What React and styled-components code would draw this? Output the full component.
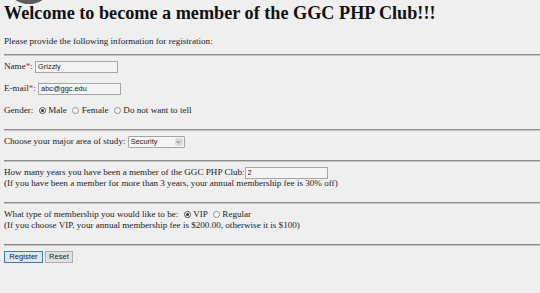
import React from 'react';
import styled, { createGlobalStyle } from 'styled-components';

// global page look

const GlobalStyle = createGlobalStyle`
  html, body {
    margin: 0;
    padding: 0;
    background: #efefef;
  }
  body {
    font-family: "Liberation Serif", "Times New Roman", serif;
    color: #1c1c1c;
    overflow: hidden;
  }
`;

const Page = styled.div`
  position: relative;
  width: 540px;
  height: 293px;
  padding-left: 4px;
  box-sizing: border-box;
  font-size: 9.1px;
`;

// dark round thing poking in from the top edge
const Blob = styled.div`
  position: absolute;
  left: 12px;
  top: -17px;
  width: 34px;
  height: 21px;
  border-radius: 50%;
  background: #5c5c5c;
`;

const Title = styled.h1`
  margin: 0;
  padding-top: 3px;
  font-size: 18.2px;
  line-height: 20px;
  font-weight: bold;
  color: #111;
  white-space: nowrap;
`;

const Intro = styled.p`
  margin: 13px 0 0;
  line-height: 11px;
`;

const Divider = styled.hr`
  margin: ${(p) => (p.$first ? '7px' : '13.5px')} 0 4.5px;
  height: 0;
  border: 0;
  border-top: 1px solid #8c8c8c;
  border-bottom: 1px solid #c4c4c4;
`;

const Line = styled.div`
  height: 11px;
  line-height: 11px;
  white-space: nowrap;
  margin-top: ${(p) => (p.$spaced ? '11px' : '0')};
`;

const Star = styled.span`
  color: #c8302c;
`;

const TextInput = styled.input`
  box-sizing: border-box;
  width: 83px;
  height: 12px;
  padding: 0 2px;
  margin: 0;
  border: 1px solid #a6a6a6;
  background: #f4f4f4;
  font-family: "Liberation Sans", Arial, sans-serif;
  font-size: 7.4px;
  color: #222;
  vertical-align: middle;
  outline: none;
`;

const Radio = styled.span`
  display: inline-block;
  position: relative;
  width: 7px;
  height: 7px;
  box-sizing: border-box;
  margin: 0 2.6px 0 3px;
  border-radius: 50%;
  border: 1px solid ${(p) => (p.$checked ? '#4a4a4a' : '#8e8e8e')};
  background: #f8f8f8;
  vertical-align: middle;
  &::after {
    content: '';
    display: ${(p) => (p.$checked ? 'block' : 'none')};
    position: absolute;
    left: 1px;
    top: 1px;
    width: 3px;
    height: 3px;
    border-radius: 50%;
    background: #333;
  }
`;

const SelectWrap = styled.span`
  position: relative;
  display: inline-block;
  vertical-align: middle;
`;

const Select = styled.select`
  appearance: none;
  box-sizing: border-box;
  width: 57px;
  height: 12px;
  margin: 0;
  padding: 0 0 0 2px;
  border: 1px solid #a6a6a6;
  border-radius: 1px;
  background: #f4f4f4;
  font-family: "Liberation Sans", Arial, sans-serif;
  font-size: 7.4px;
  color: #222;
  line-height: 10px;
  display: block;
  outline: none;
`;

const Chevron = styled.span`
  position: absolute;
  right: 2px;
  top: 2px;
  width: 8px;
  height: 8px;
  border-radius: 2px;
  background: #dcdcdc;
  display: flex;
  align-items: center;
  justify-content: center;
  pointer-events: none;
`;

const ButtonRow = styled.div`
  display: flex;
  gap: 2px;
`;

const Button = styled.button`
  box-sizing: border-box;
  height: 12px;
  width: ${(p) => p.$w}px;
  margin: 0;
  padding: 0;
  border: 1px solid ${(p) => (p.$primary ? '#3d7cb4' : '#adadad')};
  background: ${(p) => (p.$primary ? '#dfe8f1' : '#e1e1e1')};
  font-family: "Liberation Sans", Arial, sans-serif;
  font-size: 7.6px;
  line-height: 10px;
  color: #222;
`;

const App = () => (
  <>
    <GlobalStyle />
    <Page>
      <Blob />
      <Title>Welcome to become a member of the GGC PHP Club!!!</Title>
      <Intro>Please provide the following information for registration:</Intro>
      <Divider $first />

      <Line>
        Name<Star>*</Star>: <TextInput defaultValue="Grizzly" />
      </Line>
      <Line $spaced>
        E-mail<Star>*</Star>: <TextInput defaultValue="abc@ggc.edu" />
      </Line>
      <Line $spaced>
        Gender: <Radio $checked />Male <Radio />Female <Radio />Do not want to tell
      </Line>

      <Divider />
      <Line>
        Choose your major area of study:{' '}
        <SelectWrap>
          <Select defaultValue="Security">
            <option>Security</option>
          </Select>
          <Chevron>
            <svg width="5" height="4" viewBox="0 0 5 4">
              <path d="M0.6 1 L2.5 3 L4.4 1" fill="none" stroke="#666" strokeWidth="0.8" />
            </svg>
          </Chevron>
        </SelectWrap>
      </Line>

      <Divider />
      <Line>
        How many years you have been a member of the GGC PHP Club:<TextInput defaultValue="2" />
      </Line>
      <Line>
        (If you have been a member for more than 3 years, your annual membership fee is 30% off)
      </Line>

      <Divider />
      <Line>
        What type of membership you would like to be: <Radio $checked />VIP <Radio />Regular
      </Line>
      <Line>
        (If you choose VIP, your annual membership fee is $200.00, otherwise it is $100)
      </Line>

      <Divider />
      <ButtonRow>
        <Button $primary $w={39}>Register</Button>
        <Button $w={28}>Reset</Button>
      </ButtonRow>
    </Page>
  </>
);

export default App;
